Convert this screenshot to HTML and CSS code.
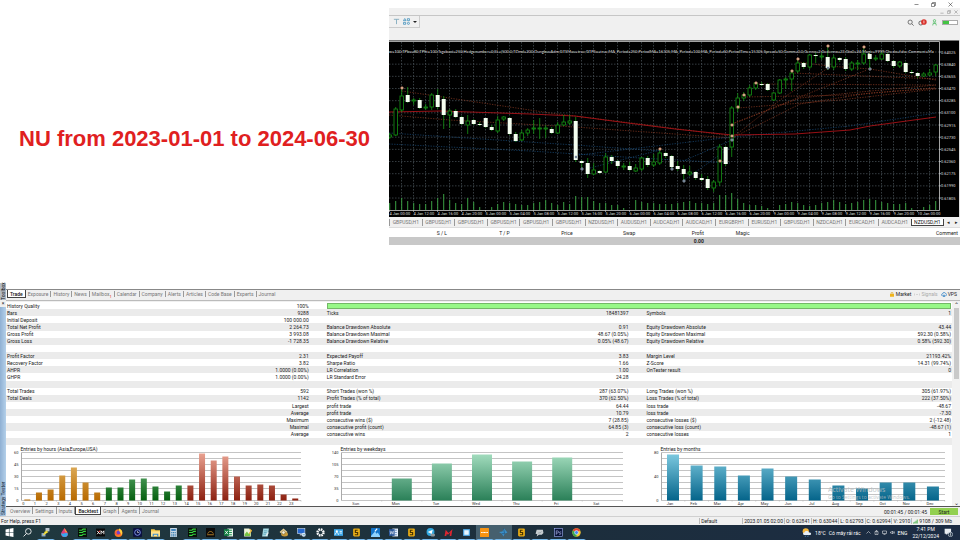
FILE: index.html
```html
<!DOCTYPE html>
<html lang="en">
<head>
<meta charset="utf-8">
<title>Strategy Tester</title>
<link rel="stylesheet" href="styles.css">
</head>
<body>
<main class="desktop">
  <section class="upper">
    <h1 class="headline">NU from 2023-01-01 to 2024-06-30</h1>
    <div class="terminal">
      <div class="titlebar">
        <button aria-label="Minimize"><svg viewBox="0 0 10 10"><path d="M1 5h8"/></svg></button>
        <button aria-label="Restore"><svg viewBox="0 0 10 10"><path d="M1 3h6v6H1zM3 3V1h6v6H7"/></svg></button>
        <button aria-label="Close"><svg viewBox="0 0 10 10"><path d="M1 1l8 8M9 1L1 9"/></svg></button>
      </div>
      <div class="mdibar">
        <button aria-label="Minimize chart"><svg viewBox="0 0 10 10"><path d="M1 8h8"/></svg></button>
        <button aria-label="Restore chart"><svg viewBox="0 0 10 10"><path d="M1 3h6v6H1zM3 3V1h6v6H7"/></svg></button>
        <button aria-label="Close chart"><svg viewBox="0 0 10 10"><path d="M1 1l8 8M9 1L1 9"/></svg></button>
      </div>
      <div class="toolbar">
        <div class="tools">
          <button aria-label="Text"><svg viewBox="0 0 8 8"><path d="M1 1.500h6M4 1.500V7" fill="none" stroke="#7fa9bd"/></svg></button>
          <button aria-label="Objects"><svg viewBox="0 0 8 8"><path d="M.5 3L2 .6 3.500 3zM5 .8h2.400v2.200H5zM.6 5h2.400v2.200H.6z" fill="none" stroke="#2f88b8" stroke-width=".8"/><circle cx="6.200" cy="6.100" r="1.200" fill="none" stroke="#2f88b8" stroke-width=".8"/></svg></button>
          <span class="caret"></span>
        </div>
        <div class="status-tools">
          <button aria-label="Search"><svg viewBox="0 0 10 10"><circle cx="4.500" cy="4.500" r="3" fill="none" stroke="#444"/><path d="M7 7l2.500 2.500" stroke="#444"/></svg></button>
          <button class="alerts" aria-label="Notifications"><svg viewBox="0 0 16 12"><circle cx="5" cy="7" r="3.500" fill="none" stroke="#555" stroke-width="1.500"/><circle cx="10.500" cy="5" r="5" fill="#d8322c"/><path d="M10.500 2.500v5" stroke="#fff" stroke-width="1.300"/></svg></button>
          <button aria-label="Account"><svg viewBox="0 0 10 12"><circle cx="5" cy="3" r="2" fill="none" stroke="#45b75a" stroke-width="1.300"/><path d="M2 11c0-5 6-5 6 0M2 7h6" fill="none" stroke="#45b75a" stroke-width="1.300"/></svg></button>
          <span class="battery"></span>
        </div>
      </div>
      <svg class="price-chart" id="price" viewBox="389 40 571 177" role="img" aria-label="NZDUSD H1"></svg>
      <nav class="symbols">
        <div class="symbol-list">
          <button>GBPUSD,H1</button><button>GBPUSD,H1</button><button>GBPUSD,H1</button><button>GBPUSD,H1</button><button>GBPUSD,H1</button><button>GBPUSD,H1</button><button>NZDUSD,H1</button><button>AUDUSD,H1</button><button>AUDCAD,H1</button><button>AUDCAD,H1</button><button>EURGBP,H1</button><button>EURUSD,H1</button><button>GBPUSD,H1</button><button>NZDCAD,H1</button><button>EURCAD,H1</button><button>AUDCAD,H1</button><button class="active">NZDUSD,H1</button>
        </div>
        <button class="arrow" aria-label="Previous">◂</button><button class="arrow" aria-label="Next">▸</button>
      </nav>
      <table class="orders">
        <colgroup><col class="c-sl"><col class="c-mid"><col class="c-mid"><col class="c-mid"><col class="c-profit"><col class="c-magic"><col></colgroup>
        <thead><tr><th>S / L</th><th>T / P</th><th>Price</th><th>Swap</th><th>Profit</th><th>Magic</th><th>Comment</th></tr></thead>
        <tbody><tr><td></td><td></td><td></td><td></td><td>0.00</td><td></td><td></td></tr></tbody>
      </table>
    </div>
  </section>

  <section class="lower">
    <aside class="rail">
      <span class="rail-top">Toolbox</span>
      <button class="rail-close" aria-label="Close panel">×</button>
      <span class="rail-body">Strategy Tester</span>
    </aside>
    <div class="panel">
      <nav class="tabs top-tabs">
        <button class="active">Trade</button><button>Exposure</button><button>History</button><button>News</button><button>Mailbox<sub>1</sub></button><button>Calendar</button><button>Company</button><button>Alerts</button><button>Articles</button><button>Code Base</button><button>Experts</button><button>Journal</button>
        <div class="services">
          <a href="#market"><svg viewBox="0 0 10 10"><path d="M1 4h8v5.500H1z" fill="#f0b51d"/><path d="M3 4V1.500h4V4" fill="none" stroke="#dca010" stroke-width="1.300"/></svg>Market</a>
          <a class="muted" href="#signals"><svg viewBox="0 0 12 10"><path d="M1 3v4M4 5h4M11 3v4" fill="none" stroke="#bbb"/></svg>Signals</a>
          <a href="#vps"><svg viewBox="0 0 12 10"><path d="M3 7.500C0 7.500 0 4 3 4c0-4 6-4 6.500-.5C12.500 3.500 12 7.500 9 7.500zM6 5v5M4 9.500h4" fill="none" stroke="#2c7fc4" stroke-width="1.400"/></svg>VPS</a>
        </div>
      </nav>
      <div class="report">
        <div class="report-body">
          <table class="stats">
            <colgroup><col class="s-name"><col class="s-value"><col class="s-name"><col class="s-value"><col class="s-name"><col></colgroup>
            <tbody>
            <tr><th>History Quality</th><td>100%</td><td class="quality" colspan="4"><div class="quality-bar"></div></td></tr>
            <tr><th>Bars</th><td>9288</td><th>Ticks</th><td>18481397</td><th>Symbols</th><td>1</td></tr>
            <tr><th>Initial Deposit</th><td>100 000.00</td><th></th><td></td><th></th><td></td></tr>
            <tr><th>Total Net Profit</th><td>2 264.73</td><th>Balance Drawdown Absolute</th><td>0.91</td><th>Equity Drawdown Absolute</th><td>43.44</td></tr>
            <tr><th>Gross Profit</th><td>3 993.08</td><th>Balance Drawdown Maximal</th><td>48.67 (0.05%)</td><th>Equity Drawdown Maximal</th><td>592.30 (0.58%)</td></tr>
            <tr><th>Gross Loss</th><td>-1 728.35</td><th>Balance Drawdown Relative</th><td>0.05% (48.67)</td><th>Equity Drawdown Relative</th><td>0.58% (592.30)</td></tr>
            <tr><th></th><td></td><th></th><td></td><th></th><td></td></tr>
            <tr><th>Profit Factor</th><td>2.31</td><th>Expected Payoff</th><td>3.83</td><th>Margin Level</th><td>21193.42%</td></tr>
            <tr><th>Recovery Factor</th><td>3.82</td><th>Sharpe Ratio</th><td>1.66</td><th>Z-Score</th><td>14.31 (99.74%)</td></tr>
            <tr><th>AHPR</th><td>1.0000 (0.00%)</td><th>LR Correlation</th><td>1.00</td><th>OnTester result</th><td>0</td></tr>
            <tr><th>GHPR</th><td>1.0000 (0.00%)</td><th>LR Standard Error</th><td>24.28</td><th></th><td></td></tr>
            <tr><th></th><td></td><th></th><td></td><th></th><td></td></tr>
            <tr><th>Total Trades</th><td>592</td><th>Short Trades (won %)</th><td>287 (63.07%)</td><th>Long Trades (won %)</th><td>305 (61.97%)</td></tr>
            <tr><th>Total Deals</th><td>1142</td><th>Profit Trades (% of total)</th><td>370 (62.50%)</td><th>Loss Trades (% of total)</th><td>222 (37.50%)</td></tr>
            <tr><th></th><td>Largest</td><th>profit trade</th><td>64.44</td><th>loss trade</th><td>-48.67</td></tr>
            <tr><th></th><td>Average</td><th>profit trade</th><td>10.79</td><th>loss trade</th><td>-7.30</td></tr>
            <tr><th></th><td>Maximum</td><th>consecutive wins ($)</th><td>7 (28.85)</td><th>consecutive losses ($)</th><td>2 (-12.48)</td></tr>
            <tr><th></th><td>Maximal</td><th>consecutive profit (count)</th><td>64.85 (3)</td><th>consecutive loss (count)</th><td>-48.67 (1)</td></tr>
            <tr><th></th><td>Average</td><th>consecutive wins</th><td>2</td><th>consecutive losses</th><td>1</td></tr>
            <tr><th></th><td></td><th></th><td></td><th></th><td></td></tr>
            </tbody>
          </table>
          <div class="charts">
            <svg id="hours" viewBox="6 445 320 61" role="img" aria-label="Entries by hours"></svg>
            <svg id="weekdays" viewBox="326 445 320 61" role="img" aria-label="Entries by weekdays"></svg>
            <svg id="months" viewBox="646 445 306 61" role="img" aria-label="Entries by months"></svg>
          </div>
        </div>
        <div class="scrollbar"><span>⌃</span><div class="thumb"></div><span class="down">⌄</span></div>
        <div class="watermark"><strong>Activate Windows</strong><span>Go to Settings to activate Windows.</span></div>
      </div>
      <nav class="tabs bottom-tabs">
        <button>Overview</button><button>Settings</button><button>Inputs</button><button class="active">Backtest</button><button>Graph</button><button>Agents</button><button>Journal</button>
        <div class="run"><span>00:01:45 / 00:01:45</span><button class="start">Start</button></div>
      </nav>
    </div>
  </section>

  <footer class="statusbar">
    <span class="help">For Help, press F1</span>
    <span class="profile">Default</span>
    <span>2023.01.05 02:00</span><span>O: 0.62841</span><span>H: 0.63044</span><span>L: 0.62793</span><span>C: 0.62994</span><span>V: 2910</span>
    <span class="net"><svg viewBox="0 0 10 8"><path d="M0 8V6h2v2zM2.500 8V4.500h2V8zM5 8V2.500h2V8zM7.500 8V0h2v8z" fill="#5db85d"/></svg>9108 / 309 Mb</span>
  </footer>

  <footer class="taskbar">
    <div class="apps" id="apps"></div>
    <div class="tray">
      <div class="weather"><svg viewBox="0 0 16 14"><circle cx="6" cy="5" r="5" fill="#f6b73c"/><path d="M4 11c-3 0-3-4 0-4 1-3 6-3 7 0 4-1 5 4 1 4z" fill="#e6eef8"/><path d="M6 12l-1 2M10 12l-1 2" stroke="#58a6e8"/></svg><span>18°C</span><span>Có mây rải rác</span></div>
      <div class="tray-icons">
        <svg viewBox="0 0 10 10"><path d="M1 7l4-4 4 4"/></svg>
        <svg viewBox="0 0 10 10"><path d="M2 3h6v6H2zM4 3V1h2v2M4 6h2"/></svg>
        <svg viewBox="0 0 10 10"><path d="M1 2h8v5H1zM3 9h4"/></svg>
        <svg viewBox="0 0 10 10"><path d="M1 4v2h2l2 2V2L3 4zM7 3l2 4M9 3L7 7"/></svg>
        <span>ENG</span>
      </div>
      <div class="clock"><span>7:41 PM</span><span>22/12/2024</span></div>
      <svg class="note" viewBox="0 0 14 14"><path d="M1 1h10v8H5l-2 2V9H1z" fill="#e8edf2"/><circle cx="10" cy="10" r="3.500" fill="#25384c" stroke="#cfd8e0"/><path d="M10 8v4" stroke="#fff"/></svg>
    </div>
  </footer>
</main>
<script src="script.js"></script>
</body>
</html>
```
FILE: styles.css
```css
* { box-sizing: border-box; }
body {
  margin: 0;
  background: #fff;
  color: #222;
  font: 5px/6px Roboto, "Noto Sans", sans-serif;
}
button {
  margin: 0;
  padding: 0;
  border: 0;
  background: none;
  color: inherit;
  font: inherit;
}
a { color: inherit; text-decoration: none; }
svg { display: block; }

.desktop { display: flex; flex-direction: column; justify-content: space-between; min-height: 100vh; }

/* Upper half */
.upper { display: grid; grid-template-columns: 389fr 571fr; margin-bottom: auto; }
.headline {
  margin: 0;
  padding-top: 32px;
  align-self: center;
  text-align: center;
  white-space: nowrap;
  color: #e0201f;
  font: bold 22px/28px "Liberation Sans", sans-serif;
}
.terminal { min-width: 0; background: #f0f0f0; }
.titlebar, .mdibar { display: flex; justify-content: flex-end; align-items: center; height: 8px; }
.titlebar { gap: 12px; padding-right: 7px; background: #fff; }
.titlebar svg { width: 5px; height: 5px; fill: none; stroke: #222; stroke-width: 1; }
.mdibar { gap: 3px; padding-right: 2px; border-bottom: 1px solid #c6c6c6; }
.mdibar svg { width: 4px; height: 4px; fill: none; stroke: #aaa; stroke-width: 2; }
.toolbar { display: flex; justify-content: space-between; align-items: flex-start; height: 24px; }
.tools { display: flex; align-items: center; gap: 3px; height: 12px; padding: 0 2px 0 4px; border: solid #ccc; border-width: 0 1px 1px 0; }
.tools svg { width: 7px; height: 7px; }
.caret { border: solid transparent; border-width: 2px 2px 0; border-top-color: #222; }
.status-tools { display: flex; align-items: center; gap: 4px; height: 13px; padding-right: 2px; }
.status-tools svg { width: 7px; height: 7px; }
.status-tools .alerts svg { width: 9px; height: 7px; }
.battery { width: 16px; height: 5px; border: 1px solid #aaa; background: linear-gradient(90deg, #43c443 40%, #fff 40%); }
.price-chart { width: 100%; height: auto; background: #000; }

.symbols { display: flex; align-items: center; height: 11px; border-bottom: 1px solid #ddd; color: #777; }
.symbol-list { display: flex; flex: 1; }
.symbol-list button { flex: 1; height: 7px; border-left: 1px solid #999; }
.symbol-list .active { background: #fff; border: solid #444; border-width: 0 1px 1px; color: #111; }
.arrow { width: 8px; color: #222; }
.orders { width: 100%; border-collapse: collapse; table-layout: fixed; background: #fff; }
.orders th, .orders td { height: 9px; padding: 0 2px 0 0; text-align: right; font-weight: 400; }
.orders td { height: 8px; background: #c8c8c8; font-weight: 700; }
.c-sl { width: 10.5%; }
.c-mid { width: 11%; }
.c-profit { width: 12%; }
.c-magic { width: 8%; }

/* Tester panel */
.lower { display: grid; grid-template-columns: 6px 1fr; }
.rail { display: flex; flex-direction: column; background: #f0f0f0; }
.rail span { writing-mode: vertical-rl; transform: rotate(180deg); line-height: 6px; white-space: nowrap; }
.rail-top { height: 17px; background: #b4bcc6; color: #111; }
.rail-close { height: 7px; line-height: 7px; }
.rail-body { flex: 1; padding-top: 1px; background: linear-gradient(270deg, #8fb0d3, #b4d0ea); color: #123; }
.panel { min-width: 0; margin-top: 6px; background: #f0f0f0; border-top: 1px solid #888; }
.tabs { display: flex; align-items: center; color: #777; }
.tabs > button { height: 6px; padding: 0 2px; border-right: 1px solid #999; line-height: 6px; }
.tabs > button:nth-last-of-type(1) { border-right: 0; }
.tabs > .active { height: 8px; border: 1px solid #444; background: #fff; color: #111; font-weight: 500; }
.top-tabs { height: 11px; padding: 0 0 2px 1px; border-bottom: 1px solid #bbb; }
.top-tabs > .active { border-top: 0; }
.top-tabs sub { color: #d22; font-size: 4px; line-height: 0; }
.services { display: flex; gap: 3px; margin-left: auto; padding-right: 3px; color: #222; }
.services a { display: flex; align-items: center; gap: 1px; }
.services svg { width: 6px; height: 5px; }
.services .muted { color: #aaa; }

.report { position: relative; display: grid; grid-template-columns: 1fr 8px; margin-top: 1px; background: #fff; border-bottom: 1px solid #555; }
.report-body { min-width: 0; }
.stats { width: 100%; height: 143px; border-collapse: collapse; table-layout: fixed; }
.stats tr:nth-child(even) { background: #ebebeb; }
.stats th, .stats td { height: 7px; padding: 0 1px; line-height: 6px; font-weight: 400; text-align: left; white-space: nowrap; }
.stats td { text-align: right; }
.stats td:nth-child(2), .stats td:nth-child(4) { padding-right: 17px; }
.stats .quality { padding: 0 1px; }
.quality-bar { height: 6px; background: #98f888; border: 1px solid #74b868; }
.s-name { width: 17%; }
.s-value { width: 16.8%; }
.charts { display: grid; grid-template-columns: 320fr 320fr 306fr; }
.charts svg { width: 100%; height: 61px; }
.scrollbar { display: flex; flex-direction: column; align-items: center; background: #f2f2f2; font-size: 6px; }
.scrollbar span { height: 6px; }
.thumb { width: 5px; height: 71px; background: #c9c9c9; }
.scrollbar .down { margin-top: auto; }
.watermark { position: absolute; right: 38px; bottom: 5px; width: 94px; color: #b4bcc0; opacity: .85; white-space: nowrap; }
.watermark strong, .watermark span { display: block; }
.watermark strong { font: 7px/9px "Open Sans", sans-serif; }
.watermark span { font: 5px/7px "Open Sans", sans-serif; }

.bottom-tabs { height: 9px; align-items: flex-start; padding-left: 2px; }
.bottom-tabs > button { height: 7px; }
.bottom-tabs > .active { border-top: 0; }
.run { display: flex; align-items: center; gap: 3px; height: 9px; margin-left: auto; padding-right: 2px; color: #222; }
.start { width: 28px; height: 7px; background: #92d050; }

.statusbar { display: flex; align-items: center; height: 9px; padding-right: 7px; border-top: 1px solid #d0d0d0; background: #f0f0f0; }
.statusbar span { padding: 0 1px; border-left: 1px solid #bbb; }
.statusbar .help { flex: 1; padding-left: 1px; border: 0; }
.statusbar .profile { width: 43px; }
.statusbar .net { display: flex; align-items: center; gap: 1px; }
.net svg { width: 5px; height: 5px; }

.taskbar { display: flex; height: 15px; background: linear-gradient(90deg, #20393f, #1c2e3c 60%, #1c2c44); color: #fff; }
.apps { display: grid; grid-template-columns: repeat(32, 1fr); width: 61%; }
.apps button { display: flex; align-items: center; justify-content: center; border: solid transparent; border-width: 0 2px 1px; }
.apps .open { border-bottom-color: #76b9ed; }
.apps .focus { background: #46606e; }
.apps svg { width: 9px; height: 9px; }
.tray { display: flex; flex: 1; align-items: center; justify-content: flex-end; gap: 5px; padding-right: 7px; }
.weather, .tray-icons { display: flex; align-items: center; gap: 3px; }
.weather svg { width: 10px; height: 9px; }
.tray-icons svg { width: 5px; height: 5px; fill: none; stroke: #fff; }
.clock { display: flex; flex-direction: column; align-items: center; line-height: 7px; }
.note { width: 9px; height: 9px; }
```
FILE: script.js
```js
const el = id => document.getElementById(id);
const text = (x, y, s, fill, anchor = 'start', size = 4) =>
  `<text x="${x}" y="${y}" fill="${fill}" font-size="${size}" text-anchor="${anchor}">${s}</text>`;
const line = (x1, y1, x2, y2, attrs) => `<line x1="${x1}" y1="${y1}" x2="${x2}" y2="${y2}" ${attrs}/>`;

/* Candles: body top, body bottom, wick top, wick bottom, 1 = bearish */
const candles = [
  [135,137,133,139,0],[109,135,107,136,0],[96,110,88,112,0],[95,102,87,103,1],[100,101,98,105,0],[100,108,98,109,1],
  [107,108,104,110,0],[95,107,93,110,0],[95,107,89,109,1],[99,115,96,129,1],[111,115,109,128,0],[111,117,109,118,1],
  [117,124,116,125,1],[121,125,115,134,0],[120,124,119,125,1],[124,125,122,126,1],[118,127,118,128,1],[127,130,125,131,1],
  [120,131,116,133,0],[117,119,116,121,0],[118,134,117,135,1],[134,141,132,142,1],[133,140,130,141,0],[130,133,128,136,0],
  [128,129,120,134,0],[128,129,118,139,0],[128,129,125,138,0],[129,133,127,134,1],[125,133,122,134,0],[122,125,115,126,0],
  [121,123,115,125,0],[121,160,117,162,1],[161,163,160,168,1],[163,174,158,178,1],[170,174,163,175,0],[171,173,170,174,1],
  [157,172,153,173,0],[157,161,155,164,1],[161,166,160,168,1],[166,167,163,170,0],[166,170,162,171,1],[168,171,164,172,0],
  [158,169,157,171,0],[158,165,156,167,1],[162,165,154,167,0],[153,163,149,165,0],[153,156,152,158,1],[156,167,155,169,1],
  [166,169,161,171,1],[169,174,165,181,1],[172,174,166,176,0],[172,178,171,180,1],[178,180,174,181,1],[179,188,176,190,1],
  [182,188,180,192,0],[147,182,144,186,0],[147,164,146,166,1],[108,147,106,157,0],[98,108,93,112,0],[95,98,92,101,0],
  [88,95,85,97,0],[83,88,82,90,0],[84,85,82,86,1],[84,90,83,91,1],[93,100,92,101,0],[80,93,79,94,0],
  [79,80,77,89,0],[73,79,70,91,0],[63,71,59,73,0],[63,67,62,69,1],[55,67,54,69,0],[55,56,53,63,1],
  [56,57,52,60,0],[57,68,46,70,1],[58,67,55,70,0],[58,60,57,62,1],[59,69,57,71,1],[63,69,61,71,0],
  [63,64,60,70,0],[54,63,48,65,0],[54,59,53,68,1],[58,59,55,61,0],[54,59,52,60,0],[54,61,53,62,1],
  [61,66,60,68,1],[62,66,61,68,0],[63,72,62,73,1],[72,73,70,74,1],[73,76,72,78,1],[74,76,72,77,0],
  [73,75,69,76,0],[65,72,64,76,0]
];
const volumes = [7,9,12,9,7,6,6,9,12,16,10,7,6,12,8,3,0,3,6,8,7,6,5,5,7,8,10,7,5,8,6,14,13,13,9,7,7,5,5,2,0,10,8,7,7,6,6,6,
  7,8,9,7,7,6,7,15,15,17,11,7,5,5,4,2,0,5,6,8,7,5,4,5,7,8,10,8,6,7,8,10,11,10,8,7,6,6,7,2,0,3,5,9];

function priceChart() {
  let s = '<rect x="389" y="40" width="571" height="177" fill="#000"/><rect x="389" y="40" width="571" height="1" fill="#777"/>';
  const grid = 'stroke="#4c565c" stroke-width=".7" stroke-dasharray="1.500 1.500"';
  for (let x = 401.5; x < 939; x += 12) s += line(x, 42, x, 210, grid);
  const prices = ['64025','63840','63655','63470','63285','63100','62915','62730','62545','62360','62175','61990','61805'];
  prices.forEach((p, i) => {
    const y = 52 + i * 12.17;
    s += line(389, y, 939, y, grid) + line(939, y, 941, y, 'stroke="#ccc" stroke-width=".7"') + text(941, y + 1.5, '0.' + p, '#ddd');
  });
  volumes.forEach((v, i) => { s += `<rect x="${389.2 + i * 6}" y="${210 - v}" width="1" height="${v}" fill="#3aa042"/>`; });

  const dots = (c, pts) => `<polyline points="${pts}" fill="none" stroke="${c}" stroke-width=".7" stroke-dasharray="1.300 1.300"/>`;
  ['402,91 550,113 640,124 732,136','389,115 450,120 575,127 732,138','732,124 800,98 860,92 936,85','732,138 800,104 870,93 936,88',
   '738,108 840,100 936,89','744,97 850,95 936,88','756,84 936,85','792,73 936,79','798,62 828,66 870,69 936,80','732,138 780,100 828,68',
   '732,124 780,105 867,70'].forEach(p => { s += dots('#8a3a22', p); });
  ['389,133 575,145 660,151','389,144 530,151 640,158 730,163','579,155 732,137','590,168 660,150','683,161 732,140',
   '683,181 732,146','732,137 850,126 936,113'].forEach(p => { s += dots('#184a78', p); });
  s += '<polyline points="389,112 440,111 530,114 575,116 620,122 675,129 732,135 795,134 850,130 870,126 936,117" fill="none" stroke="#a81217" stroke-width=".9"/>';

  candles.forEach(([t, b, wt, wb, bear], i) => {
    const x = 389.7 + i * 6;
    s += line(x, wt, x, wb, 'stroke="#149414" stroke-width=".8"');
    s += bear
      ? `<rect x="${x - 2}" y="${t}" width="4" height="${b - t}" fill="#f4fff0"/>`
      : `<rect x="${x - 1.7}" y="${t}" width="3.400" height="${b - t}" fill="#000" stroke="#149414" stroke-width=".8"/>`;
  });
  [[402,88],[660,149],[720,161],[732,125],[732,136],[738,107],[744,95],[756,83],[792,71],[798,59],[828,46],[864,47]]
    .forEach(([x, y]) => { s += `<circle cx="${x}" cy="${y}" r="1.300" fill="#e5c8a8" stroke="#b46a50" stroke-width=".6"/>`; });
  [[576,157],[582,169],[672,169],[684,181],[732,140],[828,68],[870,69]]
    .forEach(([x, y]) => { s += `<circle cx="${x}" cy="${y}" r="1.200" fill="#345" stroke="#cde" stroke-width=".6"/>`; });

  s += '<path d="M389 41.500H939.500V210.500H389" fill="none" stroke="#ccc" stroke-width=".8"/><rect x="959" y="40" width="1" height="177" fill="#ddd"/>';
  s += '<g font-family="Lato">' +
    text(389, 52.5, 'w=100;TPbu=80;TPfit=100;Tsgabuoi=250;Hedgenumber=0;SL=(500.0;TDmd=200;DungbuuAdm;GTSMuu=true;GTPSu=true;MA_Period=250;PeriodMA=16305;MA_Period=100;MA_Period=60;PeriodTime=15305;Spread=50;Comm=0.0;Genno=2;Gedenno=23;Gio0=24;Magic=9999;Chedo=false;Comment=Ma', '#ddd') + '</g>';
  const times = ['4 Jan 00:00','4 Jan 12:00','4 Jan 16:00','4 Jan 20:00','5 Jan 00:00','5 Jan 04:00','5 Jan 08:00','5 Jan 12:00','5 Jan 16:00','5 Jan 20:00',
    '6 Jan 00:00','6 Jan 04:00','6 Jan 08:00','6 Jan 12:00','6 Jan 16:00','6 Jan 20:00','9 Jan 00:00','9 Jan 04:00','9 Jan 08:00','9 Jan 12:00','9 Jan 16:00','9 Jan 20:00','10 Jan 00:00'];
  times.forEach((t, i) => { s += text(389.5 + i * 24, 215, t, '#ddd') + line(389.5 + i * 24, 210, 389.5 + i * 24, 212, 'stroke="#ccc" stroke-width=".6"'); });
  el('price').innerHTML = s;
}

function barChart(id, c) {
  const top = 452.5, base = 500.5;
  let s = '<defs>' + c.colors.map(([a, b], i) =>
    `<linearGradient id="${id}${i}" gradientUnits="userSpaceOnUse" x1="0" y1="${top}" x2="0" y2="${base}"><stop offset="0" stop-color="${a}"/><stop offset="1" stop-color="${b}"/></linearGradient>`).join('') + '</defs>';
  s += text(c.left - 1, 451, c.title, '#222', 'start', 5);
  for (let i = 0; i <= 8; i++) s += line(c.left, top + i * 6, c.right, top + i * 6, 'stroke="#c4c4c4" stroke-width="1"');
  s += line(c.left, top, c.left, base, 'stroke="#aaa" stroke-width="1"');
  c.ticks.forEach((t, i) => { s += text(c.left - 3, top + 1.5 + i * 48 / (c.ticks.length - 1), t, '#333', 'end'); });
  c.heights.forEach((h, i) => {
    const x = c.first + i * c.step;
    if (h) s += `<rect x="${x - c.width / 2}" y="${base - h}" width="${c.width}" height="${h}" fill="url(#${id}${c.color(i)})"/>`;
    s += line(x + c.step / 2, base, x + c.step / 2, base + 1, 'stroke="#aaa" stroke-width=".6"');
    s += text(x + c.shift, 505, c.labels[i], '#333', 'middle');
  });
  el(id).innerHTML = s;
}

priceChart();
barChart('hours', {
  title: 'Entries by hours (Asia,Europe,USA)', left: 21.5, right: 301, first: 27.3, step: 11.65, width: 6, shift: -4,
  ticks: [60, 45, 30, 15, 0], labels: Array.from({ length: 24 }, (_, i) => i),
  heights: [1,8,11,25,33,18,8,13,13,21,22,14,9,15,15,47,40,44,24,15,16,15,6,2],
  colors: [['#eac37a','#b86a00'],['#86cc98','#066010'],['#eba493','#8c2010']], color: i => i < 7 ? 0 : i < 14 ? 1 : 2
});
barChart('weekdays', {
  title: 'Entries by weekdays', left: 341.5, right: 623, first: 361.7, step: 40.1, width: 20, shift: -6,
  ticks: [140, 105, 70, 35, 0], labels: ['Sun','Mon','Tue','Wed','Thu','Fri','Sat'], heights: [0,22,37,46,39,43,0],
  colors: [['#a6dfc1','#2a8058']], color: () => 0
});
barChart('months', {
  title: 'Entries by months', left: 661.5, right: 945, first: 673, step: 23.63, width: 12, shift: -3,
  ticks: [80, 40, 0], labels: ['Jan','Feb','Mar','Apr','May','Jun','Jul','Aug','Sep','Oct','Nov','Dec'], heights: [46,35,34,25,32,24,21,15,12,18,18,14],
  colors: [['#80cce2','#04648a']], color: () => 0
});

const database = '<rect x="2" y="1" width="12" height="14" rx="2" fill="#e9ad16"/><path d="M10 4H6v4h4v4H5" fill="none" stroke="#493400" stroke-width="2"/>';
const matrix = '<rect width="16" height="16" rx="1" fill="#071007"/><path d="M2 4h5l2-2h5M2 8h6l2-2h4M2 13h5l2-2h5" fill="none" stroke="#38d540" stroke-width="2"/>';
const apps = [
  ['Start', '<path d="M1 2.500l6-1v6H1zM8 1.400L15 0v7.500H8zM1 8.500h6v6l-6-1zM8 8.500h7V16l-7-1.400z" fill="#fff"/>', 0],
  ['Search', '<circle cx="9.500" cy="6" r="5" fill="none" stroke="#fff" stroke-width="1.500"/><path d="M6 10l-5 5" stroke="#fff" stroke-width="1.500"/>', 0],
  ['Putty', '<rect x="8" width="7" height="6" fill="#b8c4cf"/><rect x="1" y="9" width="7" height="6" fill="#8fa8c8"/><path d="M12 5L6 8h4l-6 4" fill="none" stroke="#f5df36" stroke-width="2"/>', 1],
  ['Paint', '<path d="M8 0c3 5 6 7 6 10a6 6 0 0 1-12 0C2 7 5 5 8 0z" fill="#de3d7c"/><path d="M2 9c0 9 12 9 12 1-4-3-8 2-12-1z" fill="#35a9ef"/><path d="M8 0c3 5 4 6 5 8-3 1-5-2-5-8z" fill="#f6a335"/>', 0],
  ['Matrix', matrix, 1],
  ['XM', '<rect y="1" width="16" height="14" fill="#080808"/><path d="M2 5l5 6M7 5l-5 6M9 11V5l2.500 3L14 5v6" fill="none" stroke="#fff" stroke-width="1.600"/><path d="M7 5l-2 2" stroke="#e33" stroke-width="2"/>', 1],
  ['Firefox', '<circle cx="8" cy="9" r="7" fill="#ff7a20"/><circle cx="8" cy="8" r="3.500" fill="#7541c8"/><path d="M9 1c6 2 7 8 4 12 0-5-5-6-4-12z" fill="#ffd23c"/><path d="M2 4c0 8 5 8 8 7-3 4-10 0-8-7z" fill="#ee315b"/>', 1],
  ['Clock', '<rect width="16" height="16" rx="2" fill="#0b1140"/><circle cx="8" cy="8" r="5" fill="none" stroke="#89a0ff" stroke-width="1.500"/><path d="M8 5v3h3" fill="none" stroke="#fff"/>', 1],
  ['Files', '<path d="M0 2h6l2 2h8v11H0z" fill="#f5c84b"/><path d="M0 6h16v9H0z" fill="#ffe08a"/><path d="M4 15v-4h8v4" fill="none" stroke="#3a8fd5" stroke-width="2"/>', 1],
  ['Calculator', '<rect x="2" width="12" height="16" fill="#c8d8e5"/><rect x="4" y="2" width="8" height="3" fill="#2a78b8"/><path d="M4 8h8M4 11h8M4 14h8" stroke="#397fb1" stroke-width="2" stroke-dasharray="2 1"/>', 0],
  ['Matrix', matrix, 1],
  ['Trader', '<rect width="16" height="16" fill="#0b0b0b"/><path d="M3 10c2-5 8-5 10 0M2 12h12" fill="none" stroke="#c58a2a" stroke-width="1.500"/>', 1],
  ['Excel', '<rect x="6" y="1" width="10" height="14" fill="#e7f3ea"/><path d="M9 4h5M9 8h5M9 12h5" stroke="#219653" stroke-width="2"/><rect y="2" width="9" height="12" fill="#107c41"/><path d="M2 5l5 6M7 5l-5 6" stroke="#fff" stroke-width="1.500"/>', 1],
  ['Editor', '<path d="M2 1h9l3 3v11H2z" fill="#eef4d8"/><path d="M3 11l4-5 3 4 3-2v6H3z" fill="#76c442"/><path d="M12 2l3 3-4 5" stroke="#edb332" stroke-width="2" fill="none"/>', 1],
  ['Notepad', '<path d="M4 1h10l-2 14H2z" fill="#a8dbe5"/><path d="M5 5h6M5 8h5M4 11h5" stroke="#3c87a0"/><path d="M13 8l-4 6" stroke="#eee" stroke-width="2"/>', 1],
  ['Coins', '<path d="M8 1l7 6-7 6-7-6z" fill="#efd79a"/><ellipse cx="10" cy="11" rx="6" ry="4" fill="#c89b3b"/><circle cx="8" cy="8" r="3" fill="#f9f2dc" stroke="#6b5a2c"/>', 1],
  ['Remote', '<rect x="1" y="1" width="13" height="9" fill="#2768ce" stroke="#d8e8fa"/><path d="M5 12h6" stroke="#ccd" stroke-width="2"/><circle cx="12" cy="12" r="3.500" fill="#dbe9ff"/><path d="M10 12h4" stroke="#276"/>', 1],
  ['Settings', '<circle cx="8" cy="8" r="6" fill="none" stroke="#fff" stroke-width="3" stroke-dasharray="3 1.700"/><circle cx="8" cy="8" r="4" fill="none" stroke="#fff" stroke-width="1.500"/>', 1],
  ['Contacts', '<rect y="2" width="16" height="12" fill="#3ea7e8"/><circle cx="5" cy="6" r="2" fill="#fff"/><path d="M2 12c0-5 6-5 6 0M10 6h4M10 9h4" stroke="#fff" stroke-width="1.500" fill="none"/>', 1],
  ['Database', database, 1],
  ['Photos', '<rect width="16" height="16" rx="1" fill="#1374ca"/><path d="M0 14L7 6l3 4 2-2 4 6v2H0z" fill="#8ed2ff"/><path d="M7 6l4-5" stroke="#fff" stroke-width="2"/>', 1],
  ['Word', '<rect x="6" y="1" width="10" height="14" fill="#e5eefb"/><path d="M10 4h4M10 8h4M10 12h4" stroke="#2b579a"/><rect y="2" width="10" height="12" fill="#2b579a"/><path d="M2 5l1 6 2-5 2 5 1-6" fill="none" stroke="#fff"/>', 1],
  ['Database', database, 1],
  ['Telegram', '<circle cx="8" cy="7" r="7" fill="#30a8e0"/><path d="M3 7l9-4-2 8-3-2z" fill="#fff"/><rect x="8" y="10" width="8" height="5" rx="2" fill="#8c969c"/>', 1],
  ['Mail', '<path d="M1 14L3 3l5 6 7-7-2 12h-3l1-6-4 4-2-2-1 4z" fill="#de2630"/>', 1],
  ['Viewer', '<rect x="3" y="3" width="10" height="10" fill="#e7f6ff" stroke="#4da9e8" stroke-width="2"/>', 1],
  ['Exchange', '<rect width="16" height="16" rx="1" fill="#f79414"/><path d="M2 8h12" stroke="#fff" stroke-width="2" stroke-dasharray="2 .6"/>', 1, 1],
  ['MetaTrader', '<path d="M9 1l6 7-5 2-2 5-3-5-5-3 6-1z" fill="#3a8fc8"/><path d="M8 1l2 9-5 0" fill="none" stroke="#1c4a70"/>', 1, 1],
  ['Database', database, 1],
  ['Cloud', '<path d="M3 3h11l1 6-3 3H7l-4 3 1-4-3-1z" fill="#c6cdd1"/><path d="M5 10c2-3 5 0 7-4" fill="none" stroke="#7e8a92"/>', 1],
  ['Photoshop', '<rect x="1" y="1" width="14" height="14" fill="#09133a" stroke="#a9b6ff"/><path d="M4 12V5h2a2 2 0 0 1 0 4H4M13 7c-4-1-4 2-2 2s2 3-2 2" fill="none" stroke="#c7ceff"/>', 1],
  ['Chrome', '<circle cx="8" cy="8" r="7.500" fill="#f5c52e"/><path d="M8 8L1.500 4.300A7.500 7.500 0 0 1 14.500 4.300z" fill="#e34133"/><path d="M8 8v7.500A7.500 7.500 0 0 1 1.500 4.300z" fill="#35a853"/><circle cx="8" cy="8" r="3.400" fill="#4285f4" stroke="#fff"/>', 1]
];
el('apps').innerHTML = apps.map(([name, art, open, focus]) =>
  `<button class="${open ? 'open' : ''}${focus ? ' focus' : ''}" aria-label="${name}"><svg viewBox="0 0 16 16">${art}</svg></button>`).join('');
```
